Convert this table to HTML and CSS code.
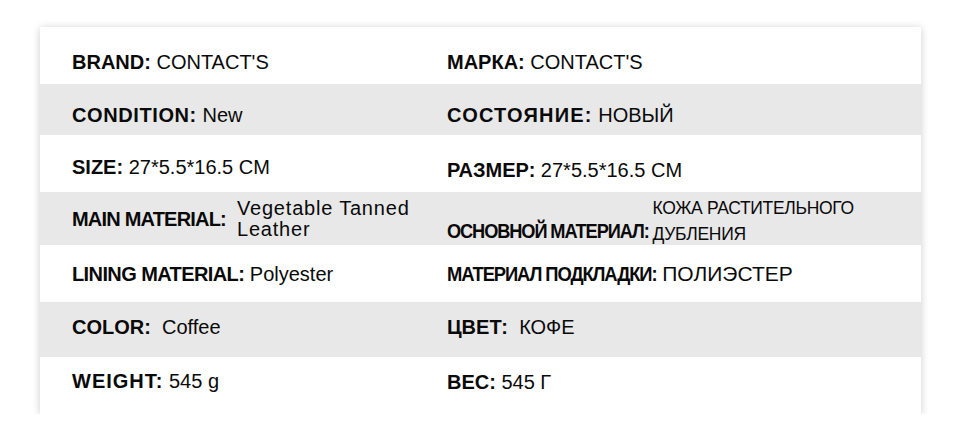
FILE: index.html
```html
<!DOCTYPE html>
<html lang="en">
<head>
<meta charset="utf-8">
<title>Specs</title>
<link rel="stylesheet" href="styles.css">
</head>
<body>
<div class="page">
  <div class="card">
    <div class="row r1">
      <div class="cell"><b>BRAND:</b> CONTACT'S</div>
      <div class="cell"><b>МАРКА:</b> CONTACT'S</div>
    </div>
    <div class="row r2 gray">
      <div class="cell"><b class="sp06">CONDITION:</b> New</div>
      <div class="cell"><b class="sp12">СОСТОЯНИЕ:</b> НОВЫЙ</div>
    </div>
    <div class="row r3">
      <div class="cell"><b>SIZE:</b> 27*5.5*16.5 CM</div>
      <div class="cell low"><b>РАЗМЕР:</b> 27*5.5*16.5 CM</div>
    </div>
    <div class="row r4 gray">
      <div class="cell split">
        <b class="tight">MAIN MATERIAL:</b>
        <span class="wide-val">Vegetable Tanned<br>Leather</span>
      </div>
      <div class="cell split-ru">
        <b class="ru-label">ОСНОВНОЙ МАТЕРИАЛ:</b>
        <span class="small-val">КОЖА РАСТИТЕЛЬНОГО<br>ДУБЛЕНИЯ</span>
      </div>
    </div>
    <div class="row r5">
      <div class="cell"><b class="tight2">LINING MATERIAL:</b> Polyester</div>
      <div class="cell"><b class="ru-cond">МАТЕРИАЛ ПОДКЛАДКИ:</b> <span class="big-val">ПОЛИЭСТЕР</span></div>
    </div>
    <div class="row r6 gray">
      <div class="cell"><b>COLOR:</b>&nbsp; Coffee</div>
      <div class="cell"><b>ЦВЕТ:</b>&nbsp; КОФЕ</div>
    </div>
    <div class="row r7">
      <div class="cell"><b class="sp1">WEIGHT:</b> 545 g</div>
      <div class="cell low1"><b>ВЕС:</b> 545 Г</div>
    </div>
  </div>
</div>
</body>
</html>
```
FILE: styles.css
```css
html, body {
  margin: 0;
  padding: 0;
  background: #ffffff;
}

.page {
  padding: 27px 0 0 40px;
  font-family: "Liberation Sans", Arial, sans-serif;
  color: #0a0a0a;
}

.card {
  width: 881px;
  background: #ffffff;
  box-shadow: 0 1px 8px rgba(0, 0, 0, 0.2);
}

.row {
  display: grid;
  grid-template-columns: 375px 1fr;
  padding-left: 32px;
  box-sizing: border-box;
  font-size: 20px;
  line-height: 20px;
}

.gray {
  background: #e8e8e8;
}

.cell {
  white-space: nowrap;
}

.cell b {
  font-weight: bold;
}

.r1 { height: 57px; padding-top: 25px; }
.r2 { height: 51px; padding-top: 21px; }
.r3 { height: 57px; padding-top: 22px; }
.r4 { height: 53px; }
.r5 { height: 57px; padding-top: 19px; }
.r6 { height: 55px; padding-top: 15px; }
.r7 { height: 57px; padding-top: 14px; }

.low { padding-top: 3px; }
.low1 { padding-top: 1px; }

.sp06 { letter-spacing: 0.6px; }
.sp12 { letter-spacing: 1.2px; }
.sp1 { letter-spacing: 1px; }

.split {
  display: flex;
  align-items: center;
  gap: 11px;
  height: 53px;
}

.tight {
  letter-spacing: -0.8px;
}

.tight2 {
  letter-spacing: -0.6px;
}

.wide-val {
  line-height: 21px;
  letter-spacing: 0.8px;
}

.split-ru {
  display: flex;
  align-items: flex-start;
  gap: 4px;
  height: 53px;
}

.ru-label {
  display: inline-block;
  margin-top: 29px;
  letter-spacing: -1.2px;
  transform: scaleX(0.91);
  transform-origin: left center;
  margin-right: -20px;
}

.ru-cond {
  display: inline-block;
  letter-spacing: -1.2px;
  transform: scaleX(0.92);
  transform-origin: left center;
  margin-right: -18px;
}

.big-val {
  font-size: 21px;
}

.small-val {
  margin-top: 3px;
  font-size: 17.5px;
  line-height: 26px;
  letter-spacing: -0.3px;
}
```
